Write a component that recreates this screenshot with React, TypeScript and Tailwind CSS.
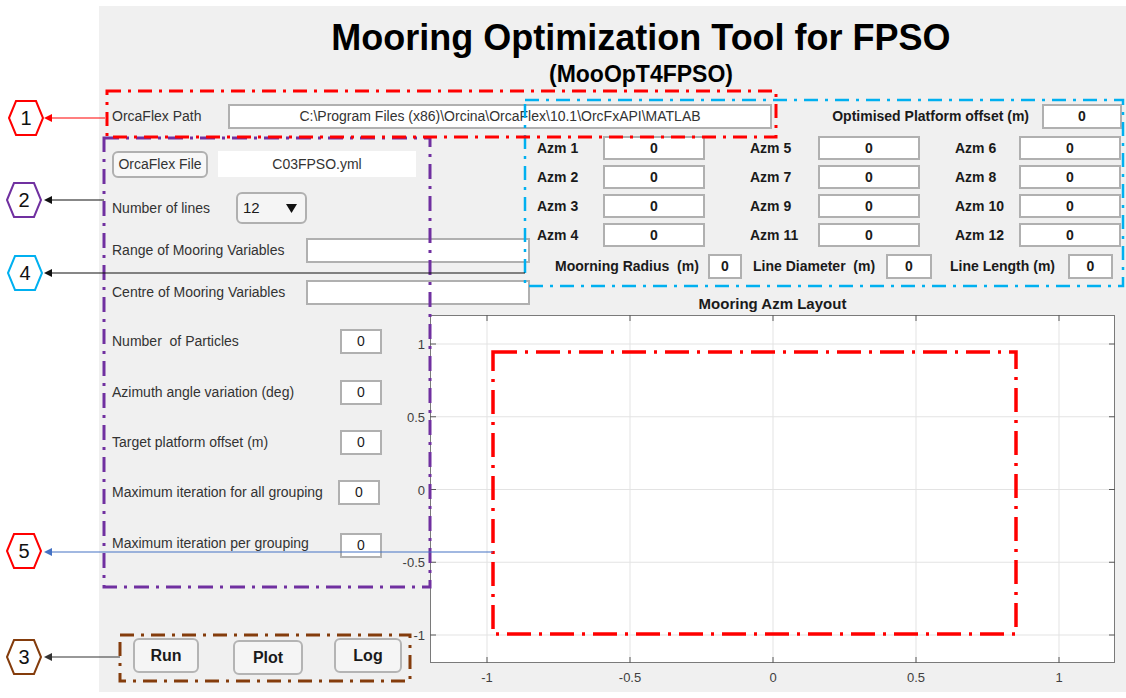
import React from "react";

// input-style box used all over the form
function Field({ value = "0", className = "" }: { value?: string; className?: string }) {
  return (
    <div
      className={
        "flex items-center justify-center shrink-0 bg-white border-2 border-[#b0b0b0] text-[14px] text-[#1a1a1a] " +
        className
      }
    >
      {value}
    </div>
  );
}

const azmRows = [
  ["Azm 1", "Azm 5", "Azm 6"],
  ["Azm 2", "Azm 7", "Azm 8"],
  ["Azm 3", "Azm 9", "Azm 10"],
  ["Azm 4", "Azm 11", "Azm 12"],
];

// x / y ticks of the layout plot, px = 343 + 286 * v, py = 174.5 - 145.5 * v
const xTicks = [-1, -0.5, 0, 0.5, 1];
const yTicks = [1, 0.5, 0, -0.5, -1];
const px = (v: number) => 343 + 286 * v;
const py = (v: number) => 174.5 - 145.5 * v;

function AzmPlot() {
  const W = 685;
  const H = 348;
  return (
    <svg
      width={W}
      height={H}
      className="overflow-visible block"
      fontFamily="'Liberation Sans', Arial, sans-serif"
      fontWeight="normal"
    >
      <rect x={0} y={0} width={W} height={H} fill="#fff" />
      {xTicks.map((t) => (
        <line key={"gx" + t} x1={px(t)} x2={px(t)} y1={0} y2={H} stroke="#e3e3e3" />
      ))}
      {yTicks.map((t) => (
        <line key={"gy" + t} x1={0} x2={W} y1={py(t)} y2={py(t)} stroke="#e3e3e3" />
      ))}
      <rect x={0.5} y={0.5} width={W - 1} height={H - 1} fill="none" stroke="#7a7a7a" />
      {xTicks.map((t) => (
        <g key={"tx" + t} stroke="#5a5a5a">
          <line x1={px(t)} x2={px(t)} y1={0} y2={6} />
          <line x1={px(t)} x2={px(t)} y1={H} y2={H - 6} />
        </g>
      ))}
      {yTicks.map((t) => (
        <g key={"ty" + t} stroke="#5a5a5a">
          <line x1={0} x2={6} y1={py(t)} y2={py(t)} />
          <line x1={W} x2={W - 6} y1={py(t)} y2={py(t)} />
        </g>
      ))}
      {xTicks.map((t) => (
        <text key={"lx" + t} x={px(t)} y={H + 19} fontSize={13} fill="#404040" textAnchor="middle">
          {t}
        </text>
      ))}
      {yTicks.map((t) => (
        <text key={"ly" + t} x={-5} y={py(t) + 5} fontSize={13} fill="#404040" textAnchor="end">
          {t}
        </text>
      ))}
    </svg>
  );
}

// numbered hexagon callout, flat top and bottom
function Hex({ cx, cy, color, n }: { cx: number; cy: number; color: string; n: string }) {
  const pts = [
    [cx - 17, cy],
    [cx - 10, cy - 17],
    [cx + 10, cy - 17],
    [cx + 17, cy],
    [cx + 10, cy + 17],
    [cx - 10, cy + 17],
  ]
    .map((p) => p.join(","))
    .join(" ");
  return (
    <g>
      <polygon points={pts} fill="#fff" stroke={color} strokeWidth={2} />
      <text x={cx} y={cy + 7} fontSize={20} textAnchor="middle" fill="#111">
        {n}
      </text>
    </g>
  );
}

function Arrow({ x1, y, color }: { x1: number; y: number; color: string }) {
  return (
    <g>
      <line x1={x1} x2={50} y1={y} y2={y} stroke={color} strokeWidth={1.2} />
      <polygon points={`44,${y} 52,${y - 4} 52,${y + 4}`} fill={color} />
    </g>
  );
}

function Annotations() {
  const red = "#ff0000";
  const purple = "#7030a0";
  const blue = "#00b0f0";
  const brown = "#843c0c";
  return (
    <svg
      className="absolute inset-0 pointer-events-none"
      width={1126}
      height={698}
      viewBox="0 0 1126 698"
      fontFamily="'Liberation Sans', Arial, sans-serif"
    >
      <g fill="none" strokeWidth={3}>
        <rect x={104} y={138} width={326} height={449} stroke={purple} strokeDasharray="15 7 3 7" />
        <rect x={525} y={100} width={598} height={186} stroke={blue} strokeWidth={2.5} strokeDasharray="14 7 3 7" />
        <rect x={107} y={91} width={669} height={46} stroke={red} strokeDasharray="14 7 3 7" />
        <rect x={120} y={635} width={290} height={46} stroke={brown} strokeDasharray="14 7 3 7" />
        <rect x={493} y={352} width={523} height={282} stroke={red} strokeWidth={3.5} strokeDasharray="24 8 3 8" />
      </g>
      <Arrow x1={105} y={118} color={red} />
      <Arrow x1={104} y={200} color="#111" />
      <Arrow x1={525} y={273} color="#111" />
      <Arrow x1={493} y={552} color="#4472c4" />
      <Arrow x1={120} y={657} color="#333" />
      <Hex cx={26} cy={118} color={red} n="1" />
      <Hex cx={24} cy={200} color={purple} n="2" />
      <Hex cx={25} cy={273} color={blue} n="4" />
      <Hex cx={24} cy={551} color={red} n="5" />
      <Hex cx={24} cy={657} color={brown} n="3" />
    </svg>
  );
}

function NumRow({ label, className = "", labelWidth = "w-[228px]" }: { label: string; className?: string; labelWidth?: string }) {
  return (
    <div className={"flex items-center h-[25px] " + className}>
      <span className={"shrink-0 whitespace-pre " + labelWidth}>{label}</span>
      <Field className="w-[42px] h-[25px]" />
    </div>
  );
}

export default function App() {
  return (
    <div className="relative w-[1126px] h-[698px] bg-white overflow-hidden font-['Liberation_Sans',Arial,sans-serif] text-[14px] text-[#333]">
      <div className="flex h-full pt-[6px] pb-[6px]">
        {/* gutter for the callouts */}
        <div className="w-[99px] shrink-0" />

        <main className="flex-1 bg-[#f0f0f0] flex flex-col">
          <header className="pl-[57px] pt-[14px] text-center text-black font-bold">
            <h1 className="text-[36px] leading-none">Mooring Optimization Tool for FPSO</h1>
            <p className="mt-[7px] text-[23px] leading-none">(MooOpT4FPSO)</p>
          </header>

          {/* path row */}
          <div className="mt-[18px] flex items-center h-[25px]">
            <span className="ml-[13px] w-[116px] shrink-0">OrcaFlex Path</span>
            <div className="w-[544px] h-full shrink-0 flex items-center justify-center bg-white border-2 border-[#b0b0b0] whitespace-nowrap">
              C:\Program Files (x86)\Orcina\OrcaFlex\10.1\OrcFxAPI\MATLAB
            </div>
            <span className="ml-auto font-bold text-[#1a1a1a] whitespace-nowrap">Optimised Platform offset (m)</span>
            <Field className="ml-[13px] mr-[4px] w-[80px] h-full font-bold" />
          </div>

          <div className="flex flex-1">
            {/* settings column */}
            <div className="w-[331px] shrink-0 pl-[13px] pt-[21px] flex flex-col">
              <div className="flex items-center h-[28px]">
                <button className="w-[96px] h-[27px] shrink-0 rounded-[6px] border-2 border-[#b0b0b0] bg-[#f7f7f7] text-[14px] text-[#333]">
                  OrcaFlex File
                </button>
                <div className="ml-[10px] w-[198px] h-[26px] shrink-0 bg-white flex items-center justify-center">C03FPSO.yml</div>
              </div>

              <div className="mt-[14px] flex items-center h-[32px]">
                <span className="w-[124px] shrink-0">Number of lines</span>
                <div className="w-[71px] h-[32px] shrink-0 rounded-[6px] border-2 border-[#b0b0b0] bg-[#f5f5f5] flex items-center justify-between pl-[5px] pr-[8px] text-[15px] text-[#1a1a1a]">
                  <span>12</span>
                  <svg width="11" height="9" viewBox="0 0 11 9">
                    <polygon points="0,0 11,0 5.5,9" fill="#111" />
                  </svg>
                </div>
              </div>

              <div className="mt-[14px] flex items-center h-[25px]">
                <span className="w-[194px] shrink-0 whitespace-nowrap">Range of Mooring Variables</span>
                <div className="w-[224px] h-[25px] shrink-0 bg-white border-2 border-[#b0b0b0]" />
              </div>
              <div className="mt-[17px] flex items-center h-[25px]">
                <span className="w-[194px] shrink-0 whitespace-nowrap">Centre of Mooring Variables</span>
                <div className="w-[224px] h-[25px] shrink-0 bg-white border-2 border-[#b0b0b0]" />
              </div>

              <NumRow className="mt-[24px]" label="Number  of Particles" />
              <NumRow className="mt-[26px]" label="Azimuth angle variation (deg)" />
              <NumRow className="mt-[25px]" label="Target platform offset (m)" />
              <NumRow className="mt-[25px]" label="Maximum iteration for all grouping" labelWidth="w-[226px]" />
              <div className="mt-[28px] flex items-center h-[25px]">
                <span className="w-[228px] shrink-0 mb-[5px] whitespace-nowrap">Maximum iteration per grouping</span>
                <Field className="w-[42px] h-[25px]" />
              </div>

              <div className="mt-[80px] flex items-start font-bold text-[16px] text-[#1a1a1a]">
                <button className="ml-[21px] w-[66px] h-[35px] shrink-0 rounded-[6px] border-2 border-[#b4b4b4] bg-[#f5f5f5]">Run</button>
                <button className="ml-[34px] mt-[2px] w-[70px] h-[35px] shrink-0 rounded-[6px] border-2 border-[#b4b4b4] bg-[#f5f5f5]">Plot</button>
                <button className="ml-[31px] w-[68px] h-[35px] shrink-0 rounded-[6px] border-2 border-[#b4b4b4] bg-[#f5f5f5]">Log</button>
              </div>
            </div>

            {/* azimuths + plot */}
            <div className="flex-1 pt-[7px] flex flex-col font-bold text-[#1a1a1a]">
              <div className="ml-[107px] flex flex-col gap-[5px]">
                {azmRows.map((row) => (
                  <div key={row[0]} className="flex items-center h-[24px]">
                    <span className="w-[66px] shrink-0">{row[0]}</span>
                    <Field className="w-[102px] h-[24px] font-bold" />
                    <span className="ml-[45px] w-[68px] shrink-0">{row[1]}</span>
                    <Field className="w-[102px] h-[24px] font-bold" />
                    <span className="ml-[35px] w-[64px] shrink-0">{row[2]}</span>
                    <Field className="w-[102px] h-[24px] font-bold" />
                  </div>
                ))}
              </div>

              <div className="mt-[7px] ml-[125px] flex items-center h-[25px]">
                <span className="w-[153px] shrink-0 whitespace-pre">Moorning Radius  (m)</span>
                <Field className="w-[34px] h-[25px] font-bold" />
                <span className="ml-[11px] w-[133px] shrink-0 whitespace-pre">Line Diameter  (m)</span>
                <Field className="w-[46px] h-[25px] font-bold" />
                <span className="ml-[18px] w-[118px] shrink-0 whitespace-nowrap">Line Length (m)</span>
                <Field className="w-[45px] h-[25px] font-bold" />
              </div>

              <div className="mt-[17px] w-[685px] text-center text-[15px] leading-none">Mooring Azm Layout</div>
              <div className="mt-[4px]">
                <AzmPlot />
              </div>
            </div>
          </div>
        </main>
      </div>

      <Annotations />
    </div>
  );
}
